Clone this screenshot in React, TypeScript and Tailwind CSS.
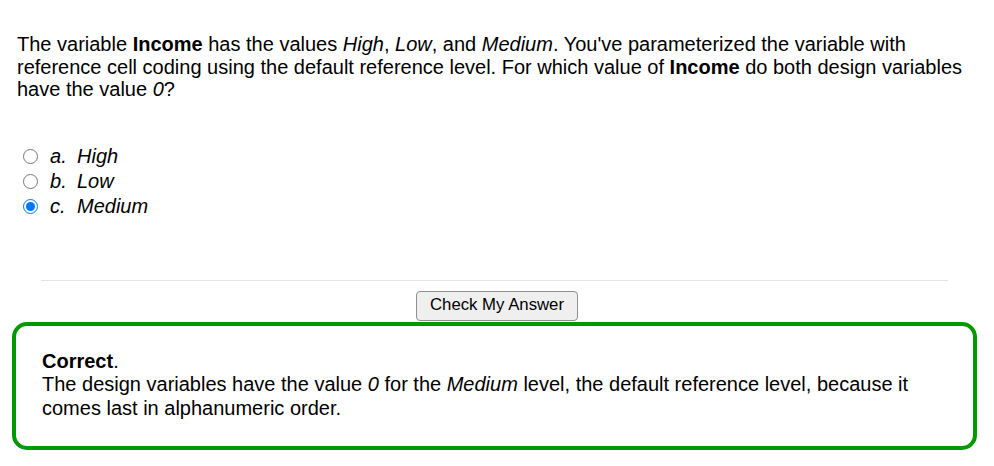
export default function App() {
  const options = [
    { key: 'a', label: 'High', checked: false },
    { key: 'b', label: 'Low', checked: false },
    { key: 'c', label: 'Medium', checked: true },
  ];

  return (
    <div className="w-[994px] h-[466px] bg-white text-black font-['Liberation_Sans',Arial,sans-serif] overflow-hidden">
      <div className="pl-[17px] pr-[20px] pt-[33px] text-[20px] leading-[22.5px]">
        <p>
          The variable <b>Income</b> has the values <i>High</i>, <i>Low</i>, and <i>Medium</i>.
          You've parameterized the variable with reference cell coding using the default reference
          level. For which value of <b>Income</b> do both design variables have the value <i>0</i>?
        </p>

        <div className="mt-[43px] flex flex-col">
          {options.map((o) => (
            <label key={o.key} className="flex items-center h-[25px]">
              <input
                type="radio"
                name="income"
                defaultChecked={o.checked}
                className="ml-[6px] mr-[12px] w-[15px] h-[15px] accent-[#0075ff]"
              />
              <span className="italic w-[27px]">{o.key}.</span>
              <span className="italic">{o.label}</span>
            </label>
          ))}
        </div>
      </div>

      <div className="mt-[61px] ml-[41px] mr-[46px] h-px bg-[#dfe5e5]" />

      <div className="mt-[10px] flex justify-center">
        <button className="h-[30px] px-[13px] rounded-[4px] border border-[#8f8f8f] bg-[#efefef] text-[16.75px] leading-none text-black">
          Check My Answer
        </button>
      </div>

      <div className="mt-[1px] ml-[12px] mr-[17px] border-[4px] border-[#009a00] rounded-[15px] pl-[26px] pr-[20px] pt-[24px] pb-[26px] text-[20px] leading-[23.5px]">
        <p>
          <b>Correct</b>.
        </p>
        <p>
          The design variables have the value <i>0</i> for the <i>Medium</i> level, the default
          reference level, because it comes last in alphanumeric order.
        </p>
      </div>
    </div>
  );
}
